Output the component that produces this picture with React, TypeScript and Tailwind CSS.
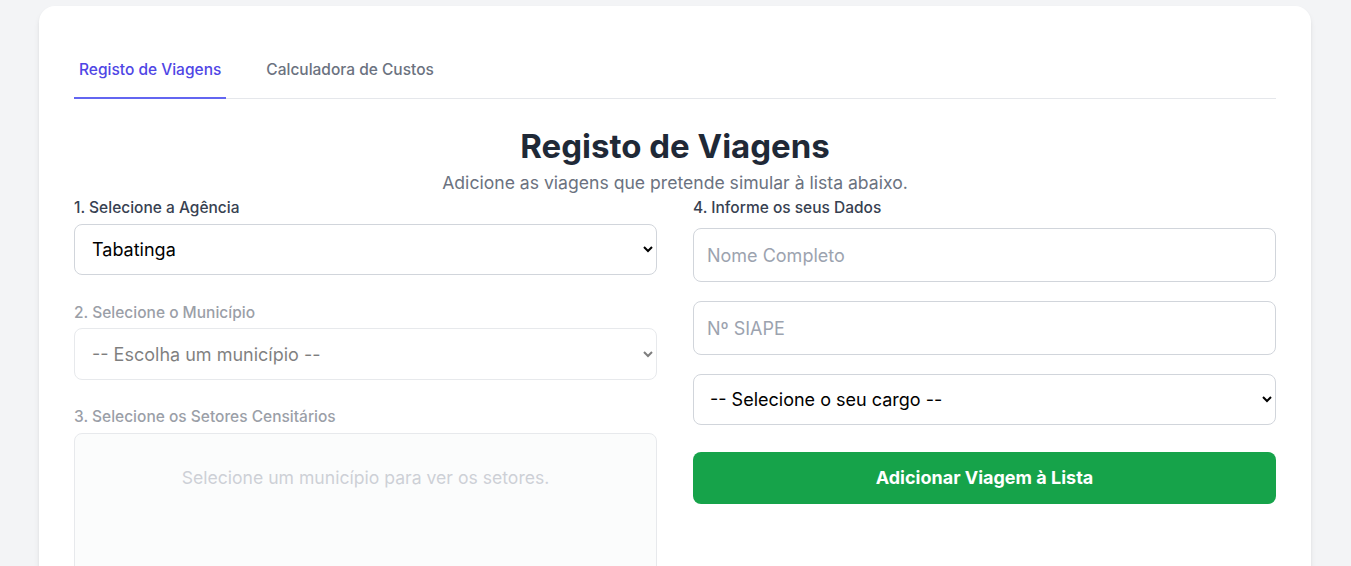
import { useState } from "react"

export default function App() {
  const [tab, setTab] = useState("registo")
  const [agencia, setAgencia] = useState("tabatinga")
  const [cargo, setCargo] = useState("")

  return (
    <div className="min-h-screen bg-[#f3f4f6] font-['Inter',sans-serif] overflow-hidden">
      <div className="ml-[39px] mt-[6px] w-[1272px] rounded-2xl bg-white shadow-md px-[35px] pt-[35px] pb-10">
        {/* Tabs */}
        <nav className="flex gap-[35px] border-b border-[#e5e7eb]">
          <button
            onClick={() => setTab("registo")}
            className={`-mb-px px-[5px] pt-[19px] pb-[17px] text-[15.5px] leading-5 font-medium border-b-2 ${
              tab === "registo"
                ? "border-[#6366f1] text-[#4f46e5]"
                : "border-transparent text-[#6b7280]"
            }`}
          >
            Registo de Viagens
          </button>
          <button
            onClick={() => setTab("custos")}
            className={`-mb-px px-[5px] pt-[19px] pb-[17px] text-[15.5px] leading-5 font-medium border-b-2 ${
              tab === "custos"
                ? "border-[#6366f1] text-[#4f46e5]"
                : "border-transparent text-[#6b7280]"
            }`}
          >
            Calculadora de Custos
          </button>
        </nav>

        {/* Header */}
        <h1 className="mt-[29px] text-center text-[33px] leading-9 font-bold text-[#1f2937]">
          Registo de Viagens
        </h1>
        <p className="mt-[5px] text-center text-[17.6px] leading-7 text-[#6b7280]">
          Adicione as viagens que pretende simular à lista abaixo.
        </p>

        <div className="grid grid-cols-2 gap-9">
          {/* Left column */}
          <div className="flex flex-col">
            <label className="block pt-px text-[15.5px] leading-5 font-medium text-[#374151] mb-[6px]">
              1. Selecione a Agência
            </label>
            <select
              value={agencia}
              onChange={(e) => setAgencia(e.target.value)}
              className="h-[51px] w-full rounded-lg border border-[#d1d5db] px-[13px] text-lg text-black"
            >
              <option value="tabatinga">Tabatinga</option>
              <option value="manaus">Manaus</option>
            </select>

            <div className="opacity-50 mt-[27px]">
              <label className="block pt-px text-[15.5px] leading-5 font-medium text-[#374151] mb-[5px]">
                2. Selecione o Município
              </label>
              <select
                disabled
                className="h-[52px] w-full rounded-lg border border-[#d1d5db] px-[13px] text-lg text-black"
              >
                <option>-- Escolha um município --</option>
              </select>
            </div>

            <div className="opacity-50 mt-[26px]">
              <label className="block pt-px text-[15.5px] leading-5 font-medium text-[#374151] mb-[6px]">
                3. Selecione os Setores Censitários
              </label>
              <div className="h-[200px] rounded-lg border border-[#d1d5db] bg-[#f9fafb] pt-[30px] text-center text-[17.6px] leading-7 text-[#9ca3af]">
                Selecione um município para ver os setores.
              </div>
            </div>
          </div>

          {/* Right column */}
          <div className="flex flex-col">
            <label className="block pt-px text-[15.5px] leading-5 font-medium text-[#374151] mb-[10px]">
              4. Informe os seus Dados
            </label>
            <input
              type="text"
              placeholder="Nome Completo"
              className="h-[54px] w-full rounded-lg border border-[#d1d5db] px-[13px] text-lg placeholder:text-[#9ca3af]"
            />
            <input
              type="text"
              placeholder="Nº SIAPE"
              className="mt-[19px] h-[54px] w-full rounded-lg border border-[#d1d5db] px-[13px] text-lg placeholder:text-[#9ca3af]"
            />
            <select
              value={cargo}
              onChange={(e) => setCargo(e.target.value)}
              className="mt-[19px] h-[51px] w-full rounded-lg border border-[#d1d5db] px-3 text-lg text-black"
            >
              <option value="">-- Selecione o seu cargo --</option>
              <option value="tecnico">Técnico</option>
              <option value="analista">Analista</option>
            </select>
            <button className="mt-[27px] h-[52px] w-full rounded-lg bg-[#16a34a] text-lg font-bold text-white">
              Adicionar Viagem à Lista
            </button>
          </div>
        </div>
      </div>
    </div>
  )
}
